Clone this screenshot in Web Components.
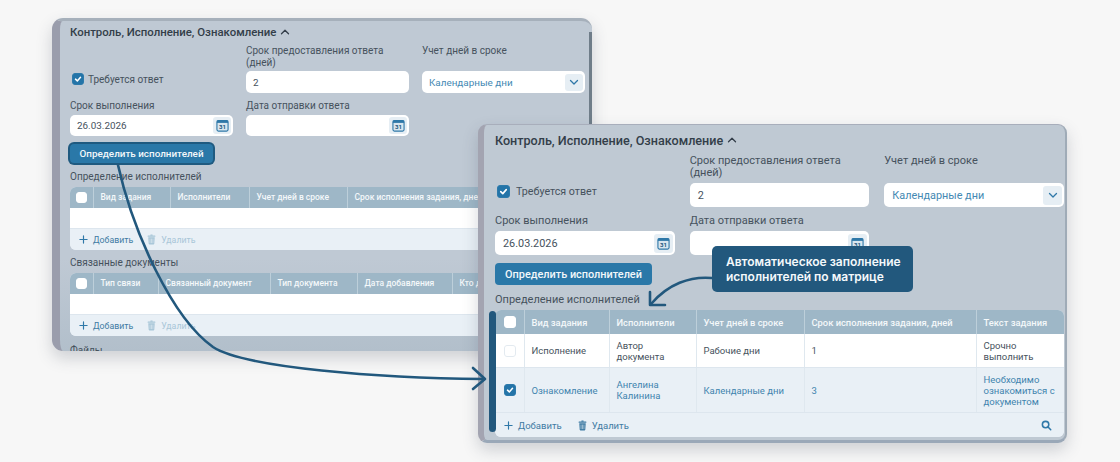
<!DOCTYPE html>
<html lang="ru">
<head>
<meta charset="utf-8">
<title>Контроль, Исполнение, Ознакомление</title>
<style>
  html, body { margin: 0; background: #f7f7f7; }
  body { font-family: Roboto, "Liberation Sans", sans-serif; color: #3d4853; }

  #back {
    left: 52px; top: 18px; width: 540px; height: 333px;
    --edge-l: 8px; --edge-t: 3px; --edge-r: 0px; --edge-b: 0px;
    --pad-l: 10px; --pad-r: 7px;
    --radius: 11px;
    --title: 11.4px; --title-h: 20px; --title-top: 1px; --grid-top: 3px;
    --label: 10px; --label-h: 12px; --value: 9.9px;
    --col-gap: 13px; --row-gap: 7px; --label-gap: 2px; --label-gap2: 3px; --field-h: 22px; --field-h2: 21px;
    --btn-h: 19px; --btn-w: 143px; --btn-font: 9.9px; --btn-top: 8px; --pad-field: 7px;
    --head-font: 8.5px; --cell-font: 8.75px; --cell-pad: 6.5px;
    --section-top: 7px; --section-gap: 4px;
    --icon-w: 18px; --icon-h: 17px; --check: 11px; --check-field: 12px; --check-gap: 4px; --check-label: 10px;
    --check-drop: 3px; --foot-h: 21px; --foot-gap: 14px;
    --panel-bg: linear-gradient(#bfc9d4 72%, #b2bfcb);
  }
  #front {
    left: 478px; top: 124px; width: 589px; height: 319px;
    --edge-l: 6px; --edge-t: 1px; --edge-r: 2px; --edge-b: 3px;
    --pad-l: 11px; --pad-r: 1px;
    --radius: 9px;
    --title: 12.6px; --title-h: 20px; --title-top: 5px; --grid-top: 5px;
    --label: 11px; --label-h: 12px; --value: 10.85px;
    --col-gap: 15px; --row-gap: 8px; --label-gap: 4px; --label-gap2: 4px; --field-h: 24px; --field-h2: 24px;
    --btn-h: 22px; --btn-w: 157px; --btn-font: 10.9px; --btn-top: 8px; --pad-field: 8px;
    --head-font: 9.35px; --cell-font: 9.5px; --cell-pad: 6.5px;
    --section-top: 9px; --section-gap: 4px;
    --icon-w: 19px; --icon-h: 19px; --check: 12px; --check-field: 13px; --check-gap: 6px; --check-label: 10.7px;
    --check-drop: 3.5px; --foot-h: 24px; --foot-gap: 16px;
    --panel-bg: #bfc9d3;
  }
</style>
</head>
<body>

<demo-canvas>
  <form-window id="back" scrollbar>
    <section-title>Контроль, Исполнение, Ознакомление</section-title>
    <form-grid>
      <check-field checked>Требуется ответ</check-field>
      <text-field label="Срок предоставления ответа (дней)" value="2"></text-field>
      <text-field label="Учет дней в сроке" value="Календарные дни" kind="select"></text-field>
      <text-field label="Срок выполнения" value="26.03.2026" kind="date" second></text-field>
      <text-field label="Дата отправки ответа" kind="date" second></text-field>
    </form-grid>
    <action-button outlined>Определить исполнителей</action-button>

    <section-label style="--section-top: 8px">Определение исполнителей</section-label>
    <data-table style="--cols: 24px 77px 79px 98px 1fr">
      <table-row head style="--h: 21px">
        <span><check-box plain></check-box></span><span>Вид задания</span><span>Исполнители</span><span>Учет дней в сроке</span><span>Срок исполнения задания, дней</span>
      </table-row>
      <table-row blank style="--h: 21px"></table-row>
      <table-foot muted></table-foot>
    </data-table>

    <section-label>Связанные документы</section-label>
    <data-table style="--cols: 24px 65px 112px 87px 95px 1fr">
      <table-row head style="--h: 21px">
        <span><check-box plain></check-box></span><span>Тип связи</span><span>Связанный документ</span><span>Тип документа</span><span>Дата добавления</span><span>Кто добавил</span>
      </table-row>
      <table-row blank style="--h: 21px"></table-row>
      <table-foot muted></table-foot>
    </data-table>

    <section-label style="--section-top: 9px">Файлы</section-label>
  </form-window>

  <form-window id="front">
    <section-title>Контроль, Исполнение, Ознакомление</section-title>
    <form-grid>
      <check-field checked>Требуется ответ</check-field>
      <text-field label="Срок предоставления ответа (дней)" value="2"></text-field>
      <text-field label="Учет дней в сроке" value="Календарные дни" kind="select"></text-field>
      <text-field label="Срок выполнения" value="26.03.2026" kind="date" second></text-field>
      <text-field label="Дата отправки ответа" kind="date" second></text-field>
    </form-grid>
    <action-button>Определить исполнителей</action-button>

    <section-label>Определение исполнителей</section-label>
    <data-table style="--cols: 30px 85px 87px 108px 172px 1fr">
      <table-row head style="--h: 24px">
        <span><check-box plain></check-box></span><span>Вид задания</span><span>Исполнители</span><span>Учет дней в сроке</span><span>Срок исполнения задания, дней</span><span>Текст задания</span>
      </table-row>
      <table-row style="--h: 34px">
        <span><check-box></check-box></span><span>Исполнение</span><span>Автор документа</span><span>Рабочие дни</span><span>1</span><span>Срочно выполнить</span>
      </table-row>
      <table-row selected style="--h: 45px">
        <span><check-box checked></check-box></span><span>Ознакомление</span><span>Ангелина Калинина</span><span>Календарные дни</span><span>3</span><span>Необходимо ознакомиться с документом</span>
      </table-row>
      <table-foot search></table-foot>
    </data-table>
    <marker-bar></marker-bar>
  </form-window>

  <call-out>Автоматическое заполнение<br>исполнителей по матрице</call-out>
  <flow-arrows></flow-arrows>
</demo-canvas>

<script>
class DemoCanvas extends HTMLElement {
  connectedCallback() {
    this.attachShadow({ mode: 'open' });
    this.shadowRoot.innerHTML = `
      <style>
        :host { display: block; position: relative; width: 1120px; height: 462px; overflow: hidden; background: #f7f7f7; }
      </style>
      <slot></slot>
    `;
  }
}

class FormWindow extends HTMLElement {
  connectedCallback() {
    this.attachShadow({ mode: 'open' });
    const bar = this.hasAttribute('scrollbar') ? '<div class="bar"></div>' : '';
    this.shadowRoot.innerHTML = `
      <style>
        :host {
          display: block;
          position: absolute;
          box-sizing: border-box;
          overflow: hidden;
          border-radius: var(--radius);
          border-style: solid;
          border-color: #a8aebb #9fabb7 #9aa8b8 #a3a4b1;
          border-width: var(--edge-t) var(--edge-r) var(--edge-b) var(--edge-l);
          padding: var(--title-top) var(--pad-r) 0 var(--pad-l);
          background: var(--panel-bg);
          box-shadow: 0 7px 16px rgba(60, 70, 85, 0.22);
        }
        :host([scrollbar]) { border-top-color: #a6b0bb; border-left-color: #9a9dac; }
        .bar { position: absolute; right: 0; top: 11px; bottom: 0; width: 3px; background: #6f7d89; }
      </style>
      <slot></slot>
      ${bar}
    `;
  }
}

class SectionTitle extends HTMLElement {
  connectedCallback() {
    this.attachShadow({ mode: 'open' });
    this.shadowRoot.innerHTML = `
      <style>
        :host {
          display: flex;
          align-items: center;
          gap: 4px;
          height: var(--title-h);
          font-size: var(--title);
          font-weight: 500;
          color: #333e49;
        }
        svg { width: 10px; height: 10px; }
      </style>
      <slot></slot>
      <svg viewBox="0 0 10 10" fill="none" stroke="#333e49" stroke-width="1.3" stroke-linecap="round" stroke-linejoin="round">
        <polyline points="1.5,6.8 5,3.3 8.5,6.8"></polyline>
      </svg>
    `;
  }
}

class FormGrid extends HTMLElement {
  connectedCallback() {
    this.attachShadow({ mode: 'open' });
    this.shadowRoot.innerHTML = `
      <style>
        :host {
          display: grid;
          grid-template-columns: repeat(3, 1fr);
          column-gap: var(--col-gap);
          row-gap: var(--row-gap);
          margin-top: var(--grid-top);
        }
      </style>
      <slot></slot>
    `;
  }
}

class CheckField extends HTMLElement {
  connectedCallback() {
    this.attachShadow({ mode: 'open' });
    const checked = this.hasAttribute('checked') ? 'checked' : '';
    this.shadowRoot.innerHTML = `
      <style>
        :host {
          display: flex;
          align-items: center;
          align-self: end;
          gap: var(--check-gap);
          height: var(--field-h);
          margin-bottom: var(--check-drop);
          padding-left: 2px;
          font-size: var(--check-label);
          color: #46525d;
          --check: var(--check-field);
        }
      </style>
      <check-box ${checked}></check-box>
      <slot></slot>
    `;
  }
}

class CheckBox extends HTMLElement {
  connectedCallback() {
    this.attachShadow({ mode: 'open' });
    const tick = this.hasAttribute('checked')
      ? '<svg viewBox="0 0 12 12" fill="none" stroke="#fff" stroke-width="1.8" stroke-linecap="round" stroke-linejoin="round"><polyline points="3,6.2 5.2,8.3 9,4"></polyline></svg>'
      : '';
    this.shadowRoot.innerHTML = `
      <style>
        :host {
          display: block;
          box-sizing: border-box;
          flex: none;
          width: var(--check);
          height: var(--check);
          border-radius: 3px;
          background: #fff;
          border: 1px solid #e3eaf0;
        }
        :host([plain]) { border-color: #fff; }
        :host([checked]) { background: #2374a8; border-color: #2d7aab; }
        svg { display: block; width: 100%; height: 100%; }
      </style>
      ${tick}
    `;
  }
}

const CALENDAR = `
  <svg viewBox="0 0 14 14" width="13" height="13">
    <rect x="1" y="1.6" width="12" height="11.4" rx="1.6" fill="#d9e6ef" stroke="#2f78a8" stroke-width="1.2"></rect>
    <rect x="1" y="1.6" width="12" height="2.6" fill="#2f78a8"></rect>
    <text x="7" y="11" text-anchor="middle" font-family="Roboto, sans-serif" font-size="6.6" font-weight="700" fill="#245a7f">31</text>
  </svg>`;

const CHEVRON = `
  <svg viewBox="0 0 10 10" width="10" height="10" fill="none" stroke="#2f78a8" stroke-width="1.3" stroke-linecap="round" stroke-linejoin="round">
    <polyline points="1.5,3.5 5,7 8.5,3.5"></polyline>
  </svg>`;

class TextField extends HTMLElement {
  connectedCallback() {
    this.attachShadow({ mode: 'open' });
    const kind = this.getAttribute('kind') || 'text';
    const value = this.getAttribute('value') || '';
    const icon = kind === 'date' ? CALENDAR : kind === 'select' ? CHEVRON : '';
    this.shadowRoot.innerHTML = `
      <style>
        :host {
          display: flex;
          flex-direction: column;
          justify-content: space-between;
          gap: var(--label-gap);
          min-width: 0;
        }
        :host([second]) { gap: var(--label-gap2); }
        .label { font-size: var(--label); line-height: var(--label-h); color: #46525d; }
        .box {
          display: flex;
          align-items: center;
          justify-content: space-between;
          box-sizing: border-box;
          height: var(--field-h);
          padding: 0 2px 0 var(--pad-field);
          background: #fff;
          border-radius: 5px;
          font-size: var(--value);
          color: #46525d;
        }
        :host([second]) .box { height: var(--field-h2); }
        :host([kind="select"]) .box { color: #4489b3; }
        .icon {
          display: flex;
          align-items: center;
          justify-content: center;
          width: var(--icon-w);
          height: var(--icon-h);
          border-radius: 3px;
          background: #e6eef4;
        }
      </style>
      <div class="label">${this.getAttribute('label')}</div>
      <div class="box">
        <span>${value}</span>
        ${icon ? `<span class="icon">${icon}</span>` : ''}
      </div>
    `;
  }
}

class ActionButton extends HTMLElement {
  connectedCallback() {
    this.attachShadow({ mode: 'open' });
    this.shadowRoot.innerHTML = `
      <style>
        :host {
          display: flex;
          align-items: center;
          justify-content: center;
          width: var(--btn-w);
          height: var(--btn-h);
          margin-top: var(--btn-top);
          border-radius: 4px;
          background: #2a78a8;
          color: #f2f7fa;
          font-size: var(--btn-font);
          font-weight: 500;
        }
        :host([outlined]) { box-shadow: 0 0 0 2px #1f5a80; }
      </style>
      <slot></slot>
    `;
  }
}

class SectionLabel extends HTMLElement {
  connectedCallback() {
    this.attachShadow({ mode: 'open' });
    this.shadowRoot.innerHTML = `
      <style>
        :host {
          display: block;
          margin: var(--section-top) 0 var(--section-gap);
          font-size: var(--label);
          line-height: var(--label-h);
          color: #46525d;
        }
      </style>
      <slot></slot>
    `;
  }
}

class DataTable extends HTMLElement {
  connectedCallback() {
    this.attachShadow({ mode: 'open' });
    this.shadowRoot.innerHTML = `
      <style>
        :host { display: block; overflow: hidden; border-radius: 6px; background: #e9f0f6; }
      </style>
      <slot></slot>
    `;
  }
}

class TableRow extends HTMLElement {
  connectedCallback() {
    this.attachShadow({ mode: 'open' });
    this.shadowRoot.innerHTML = `
      <style>
        :host {
          display: grid;
          grid-template-columns: var(--cols);
          box-sizing: border-box;
          height: var(--h);
          background: #fff;
          font-size: var(--cell-font);
          line-height: 11px;
          color: #46525d;
          border-bottom: 1px solid #dde6ee;
        }
        :host([head]) { background: #9eb7c7; color: #f4f8fa; font-size: var(--head-font); font-weight: 500; border-bottom: 0; }
        :host([selected]) { background: #e9f0f6; color: #3f84ae; }
        ::slotted(span) {
          display: flex;
          align-items: center;
          box-sizing: border-box;
          padding: 0 var(--cell-pad);
          border-right: 1px solid #dfe8ef;
          min-width: 0;
        }
        :host([head]) ::slotted(span) { border-right-color: #bdcfda; }
        ::slotted(span:first-child) { justify-content: center; padding: 0; }
        ::slotted(span:last-child) { border-right: 0; }
      </style>
      <slot></slot>
    `;
  }
}

class TableFoot extends HTMLElement {
  connectedCallback() {
    this.attachShadow({ mode: 'open' });
    const search = this.hasAttribute('search')
      ? `<svg class="search" viewBox="0 0 12 12" width="11" height="11" fill="none" stroke="#2f78a8" stroke-width="1.7" stroke-linecap="round">
           <circle cx="5" cy="5" r="3.5"></circle><line x1="7.7" y1="7.7" x2="10.6" y2="10.6"></line>
         </svg>`
      : '';
    this.shadowRoot.innerHTML = `
      <style>
        :host {
          display: flex;
          align-items: center;
          gap: var(--foot-gap);
          height: var(--foot-h);
          padding: 0 8px 0 9px;
          background: #e9f0f6;
          font-size: var(--cell-font);
          color: #3f7ba3;
        }
        .act { display: flex; align-items: center; gap: 5px; }
        .del { color: #3f7ba3; }
        :host([muted]) .del { color: #a8c6d8; }
        .search { margin-left: auto; margin-right: 4px; }
      </style>
      <span class="act">
        <svg viewBox="0 0 10 10" width="9" height="9" fill="none" stroke="#2f78a8" stroke-width="1.3" stroke-linecap="round">
          <line x1="5" y1="1" x2="5" y2="9"></line><line x1="1" y1="5" x2="9" y2="5"></line>
        </svg>
        <span>Добавить</span>
      </span>
      <span class="act del">
        <svg viewBox="0 0 10 12" width="9" height="11" fill="currentColor">
          <rect x="3.6" y="0.4" width="2.8" height="1.4" rx="0.5"></rect>
          <rect x="0.6" y="1.5" width="8.8" height="1.5" rx="0.5"></rect>
          <path d="M1.4 3.6h7.2l-.5 7.2a.9.9 0 0 1-.9.8H2.8a.9.9 0 0 1-.9-.8z"></path>
          <path d="M3.4 5v5M5 5v5M6.6 5v5" stroke="#e9f0f6" stroke-width="0.6"></path>
        </svg>
        <span>Удалить</span>
      </span>
      ${search}
    `;
  }
}

class MarkerBar extends HTMLElement {
  connectedCallback() {
    this.attachShadow({ mode: 'open' });
    this.shadowRoot.innerHTML = `
      <style>
        :host {
          display: block;
          position: absolute;
          left: 5px;
          top: 186px;
          width: 7px;
          height: 121px;
          border-radius: 4px;
          background: #22587d;
        }
      </style>
    `;
  }
}

class CallOut extends HTMLElement {
  connectedCallback() {
    this.attachShadow({ mode: 'open' });
    this.shadowRoot.innerHTML = `
      <style>
        :host {
          display: flex;
          align-items: center;
          position: absolute;
          left: 712px;
          top: 246px;
          box-sizing: border-box;
          width: 201px;
          height: 46px;
          padding-left: 14px;
          border-radius: 5px;
          background: #22587d;
          color: #f4f8fb;
          font-family: Inter, "Noto Sans", sans-serif;
          font-size: 12px;
          font-weight: 600;
          line-height: 15px;
        }
      </style>
      <div><slot></slot></div>
    `;
  }
}

class FlowArrows extends HTMLElement {
  connectedCallback() {
    this.attachShadow({ mode: 'open' });
    this.shadowRoot.innerHTML = `
      <style>
        :host { display: block; position: absolute; left: 0; top: 0; pointer-events: none; }
        svg { display: block; }
      </style>
      <svg width="1120" height="462" viewBox="0 0 1120 462" fill="none" stroke="#22587d" stroke-width="2.6" stroke-linecap="round" stroke-linejoin="round">
        <path d="M118 165 C133 232 172 318 213 347 C245 368 380 378 484 379"></path>
        <polyline points="473,368 485,379 473,389"></polyline>
        <path d="M712 278 C690 276 668 284 651 304"></path>
        <polyline points="650,292 650,305 665,305"></polyline>
      </svg>
    `;
  }
}

customElements.define('demo-canvas', DemoCanvas);
customElements.define('form-window', FormWindow);
customElements.define('section-title', SectionTitle);
customElements.define('form-grid', FormGrid);
customElements.define('check-field', CheckField);
customElements.define('check-box', CheckBox);
customElements.define('text-field', TextField);
customElements.define('action-button', ActionButton);
customElements.define('section-label', SectionLabel);
customElements.define('data-table', DataTable);
customElements.define('table-row', TableRow);
customElements.define('table-foot', TableFoot);
customElements.define('marker-bar', MarkerBar);
customElements.define('call-out', CallOut);
customElements.define('flow-arrows', FlowArrows);
</script>
</body>
</html>
